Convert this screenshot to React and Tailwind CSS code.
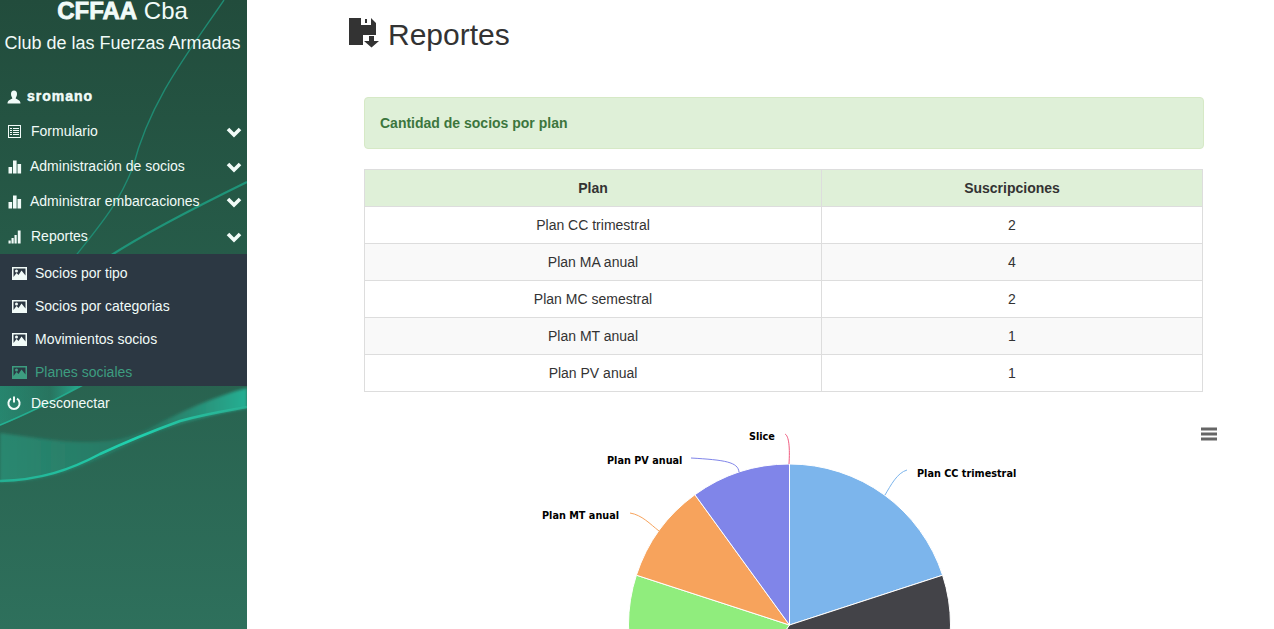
const menu = [
  { label: "Formulario", icon: "list", gap: "ml-[9px]" },
  { label: "Administración de socios", icon: "stats", gap: "ml-[8px]" },
  { label: "Administrar embarcaciones", icon: "stats", gap: "ml-[8px]" },
  { label: "Reportes", icon: "signal", gap: "ml-[9px]" },
];

const submenu = [
  { label: "Socios por tipo" },
  { label: "Socios por categorias" },
  { label: "Movimientos socios" },
  { label: "Planes sociales", active: true },
];

const rows = [
  { plan: "Plan CC trimestral", total: 2 },
  { plan: "Plan MA anual", total: 4 },
  { plan: "Plan MC semestral", total: 2 },
  { plan: "Plan MT anual", total: 1 },
  { plan: "Plan PV anual", total: 1 },
];

const MenuIcon = ({ name }) => {
  if (name === "list") {
    return (
      <svg width="14" height="14" viewBox="0 0 14 14" fill="none" stroke="currentColor">
        <rect x="0.5" y="0.5" width="12" height="12" strokeWidth="1" />
        <path d="M2 3.5h2M5 3.5h6M2 5.5h2M5 5.5h6M2 7.5h2M5 7.5h6M2 9.5h2M5 9.5h6" strokeWidth="1" />
      </svg>
    );
  }
  if (name === "stats") {
    return (
      <svg width="14" height="14" viewBox="0 0 14 14" fill="currentColor">
        <rect x="0.5" y="7" width="3.6" height="6.5" />
        <rect x="5" y="0.5" width="3.6" height="13" />
        <rect x="9.5" y="4" width="3.6" height="9.5" />
      </svg>
    );
  }
  return (
    <svg width="14" height="14" viewBox="0 0 14 14" fill="currentColor">
      <rect x="0.5" y="10.5" width="2.2" height="3" />
      <rect x="3.5" y="8" width="2.2" height="5.5" />
      <rect x="6.5" y="5" width="2.2" height="8.5" />
      <rect x="9.8" y="0.5" width="2.8" height="13" />
    </svg>
  );
};

const Chevron = () => (
  <svg width="16" height="12" viewBox="0 0 16 12" fill="none" stroke="currentColor" strokeWidth="3.6">
    <path d="M2 3l6 6 6-6" />
  </svg>
);

const PictureIcon = () => (
  <svg width="15" height="13" viewBox="0 0 15 13" fill="currentColor">
    <path fillRule="evenodd" d="M0 0h15v13H0zM1.5 1.5v8.5l3-4 2 2 3-4.5 4 5V1.5zM4.5 2.5a1.5 1.5 0 1 0 0 3 1.5 1.5 0 0 0 0-3z" />
  </svg>
);

// wave picture behind the sidebar
const SidebarWaves = () => (
  <svg className="absolute inset-0" width="247" height="629" viewBox="0 0 247 629" fill="none">
    <defs>
      <linearGradient id="band" x1="0" y1="0" x2="1" y2="0">
        <stop offset="0" stopColor="#23b89b" stopOpacity="0.4" />
        <stop offset="0.6" stopColor="#25b89c" stopOpacity="0.2" />
        <stop offset="1" stopColor="#25c9aa" stopOpacity="0.75" />
      </linearGradient>
      <linearGradient id="edge" x1="0" y1="0" x2="1" y2="0">
        <stop offset="0" stopColor="#22c4a4" stopOpacity="0.7" />
        <stop offset="0.55" stopColor="#20d3b0" />
        <stop offset="1" stopColor="#2bbf9f" stopOpacity="0.6" />
      </linearGradient>
      <filter id="soft" x="-10%" y="-20%" width="120%" height="140%">
        <feGaussianBlur stdDeviation="1.6" />
      </filter>
    </defs>
    <path d="M224 0C190 50 150 100 133 167C118 205 100 225 74 258" stroke="#1f8a72" strokeWidth="1.4" />
    <path d="M247 182C200 205 150 230 110 256" stroke="#1f9479" strokeWidth="2.2" />
    <path d="M0 384H83C55 400 25 415 0 426Z" fill="url(#band)" />
    <path d="M0 425C25 415 55 400 83 385" stroke="#22c4a4" strokeOpacity="0.7" strokeWidth="1.5" />
    <path
      d="M0 433C30 437 60 442 83 442C110 442 125 440 150 428C180 412 215 396 247 388V408C215 414 190 420 160 431C120 448 95 462 65 472C40 479 20 482 0 482Z"
      fill="url(#band)"
      filter="url(#soft)"
    />
    <path d="M0 481C40 480 70 470 100 454C130 440 150 432 180 421C205 414 225 411 247 407" stroke="url(#edge)" strokeWidth="2.5" />
  </svg>
);

const Sidebar = () => (
  <aside className="relative w-[247px] shrink-0 h-full overflow-hidden bg-gradient-to-b from-[#224c3c] via-[#275f4c] to-[#2e705c] text-white">
    <SidebarWaves />
    <div className="relative font-['Liberation_Sans',sans-serif] text-[#f1fbf8]">
      <div className="text-center h-[21px] leading-[21px] text-[24px] pr-[2px]">
        <span className="font-bold [-webkit-text-stroke:0.8px_#f1fbf8]">CFFAA</span> Cba
      </div>
      <div className="text-center mt-[12px] h-[21px] leading-[21px] text-[18px] whitespace-nowrap pr-[2px]">
        Club de las Fuerzas Armadas
      </div>
      <div className="flex items-center h-[35px] mt-[25px] pl-[7px] text-[14px] font-bold tracking-[1px] [-webkit-text-stroke:0.5px_#f1fbf8]">
        <svg width="14" height="14" viewBox="0 0 14 14" fill="currentColor">
          <path d="M7 0.5C9 0.5 10 2 10 4C10 6 9 7.5 8.6 8.3C9.5 9.5 13.5 10 13.5 13.5H0.5C0.5 10 4.5 9.5 5.4 8.3C5 7.5 4 6 4 4C4 2 5 0.5 7 0.5Z" />
        </svg>
        <span className="ml-[6px]">sromano</span>
      </div>
      {menu.map((item) => (
        <div key={item.label} className="flex items-center h-[35px] pl-[8px] pr-[5px] text-[14px]">
          <MenuIcon name={item.icon} />
          <span className={item.gap}>{item.label}</span>
          <span className="ml-auto">
            <Chevron />
          </span>
        </div>
      ))}
      <div className="bg-[#2c3843] h-[132px] pt-[3px]">
        {submenu.map((item) => (
          <div
            key={item.label}
            className={`flex items-center h-[33px] pl-[12px] text-[14px] ${item.active ? "text-[#3d9d80]" : "text-[#f1fbf8]"}`}
          >
            <PictureIcon />
            <span className="ml-[8px]">{item.label}</span>
          </div>
        ))}
      </div>
      <div className="flex items-center h-[34px] pl-[7px] text-[14px]">
        <svg width="14" height="14" viewBox="0 0 14 14" fill="none" stroke="currentColor" strokeWidth="2">
          <path d="M4 2.6A5.6 5.6 0 1 0 10 2.6" />
          <path d="M7 0.5V6.5" />
        </svg>
        <span className="ml-[10px]">Desconectar</span>
      </div>
    </div>
  </aside>
);

const Chart = () => {
  const label = "font-['DejaVu_Sans',sans-serif] text-[9.7px] font-bold";
  return (
    <svg width="853" height="217" viewBox="364 412 853 217" className="block mt-[20px] overflow-visible">
      <path d="M789.5 625L789.5 464A161 161 0 0 1 942.6 575.2Z" fill="#7cb5ec" stroke="#fff" />
      <path d="M789.5 625L942.6 575.2A161 161 0 0 1 694.9 755.3Z" fill="#434348" stroke="#fff" />
      <path d="M789.5 625L694.9 755.3A161 161 0 0 1 636.4 575.2Z" fill="#90ed7d" stroke="#fff" />
      <path d="M789.5 625L636.4 575.2A161 161 0 0 1 694.9 494.7Z" fill="#f7a35c" stroke="#fff" />
      <path d="M789.5 625L694.9 494.7A161 161 0 0 1 789.5 464Z" fill="#8085e9" stroke="#fff" />
      <path d="M885 495C891 485 897 473 907 470" stroke="#7cb5ec" fill="none" />
      <path d="M659 531C650 524 642 515 630 513" stroke="#f7a35c" fill="none" />
      <path d="M739 472C738 462 725 460 691 458" stroke="#8085e9" fill="none" />
      <path d="M789 464C790 448 789 436 785 434" stroke="#f15c80" fill="none" />
      <text x="917" y="477" className={label}>Plan CC trimestral</text>
      <text x="542" y="519" className={label}>Plan MT anual</text>
      <text x="607" y="464" className={label}>Plan PV anual</text>
      <text x="749" y="440" className={label}>Slice</text>
      <path d="M1201 429H1217M1201 434H1217M1201 439H1217" stroke="#666" strokeWidth="3" />
    </svg>
  );
};

const Main = () => (
  <main className="flex-1 min-w-0 h-full overflow-hidden pl-[102px] font-['Liberation_Sans',sans-serif] text-[14px] text-[#333]">
    <div className="flex items-center h-[97px] pb-[28px] text-[30px]">
      <svg width="31" height="30" viewBox="1 0 31 30" fill="#333" className="mb-[4px]">
        <path fillRule="evenodd" d="M1 0H23L28 5V17H15V27H1ZM13 0H23V7H13Z" />
        <path d="M17 1H19V5H17Z" />
        <path d="M21 18H26V23H31L23.5 29.5L16 23H21Z" />
      </svg>
      <span className="ml-[8px]">Reportes</span>
    </div>
    <div className="ml-[15px] w-[840px]">
      <div className="h-[52px] flex items-center px-[15px] bg-[#dff0d8] border border-[#d6e9c6] rounded-[4px] text-[#3c763d] font-bold">
        Cantidad de socios por plan
      </div>
      <table className="mt-[20px] w-[839px] table-fixed border-collapse text-center">
        <thead>
          <tr className="h-[37px] bg-[#dff0d8]">
            <th className="w-[457px] border border-[#ddd] font-bold">Plan</th>
            <th className="border border-[#ddd] font-bold">Suscripciones</th>
          </tr>
        </thead>
        <tbody>
          {rows.map((row, i) => (
            <tr key={row.plan} className={`h-[37px] ${i % 2 === 1 ? "bg-[#f9f9f9]" : "bg-white"}`}>
              <td className="border border-[#ddd]">{row.plan}</td>
              <td className="border border-[#ddd]">{row.total}</td>
            </tr>
          ))}
        </tbody>
      </table>
      <Chart />
    </div>
  </main>
);

export default function App() {
  return (
    <div className="flex h-screen overflow-hidden bg-white">
      <Sidebar />
      <Main />
    </div>
  );
}
